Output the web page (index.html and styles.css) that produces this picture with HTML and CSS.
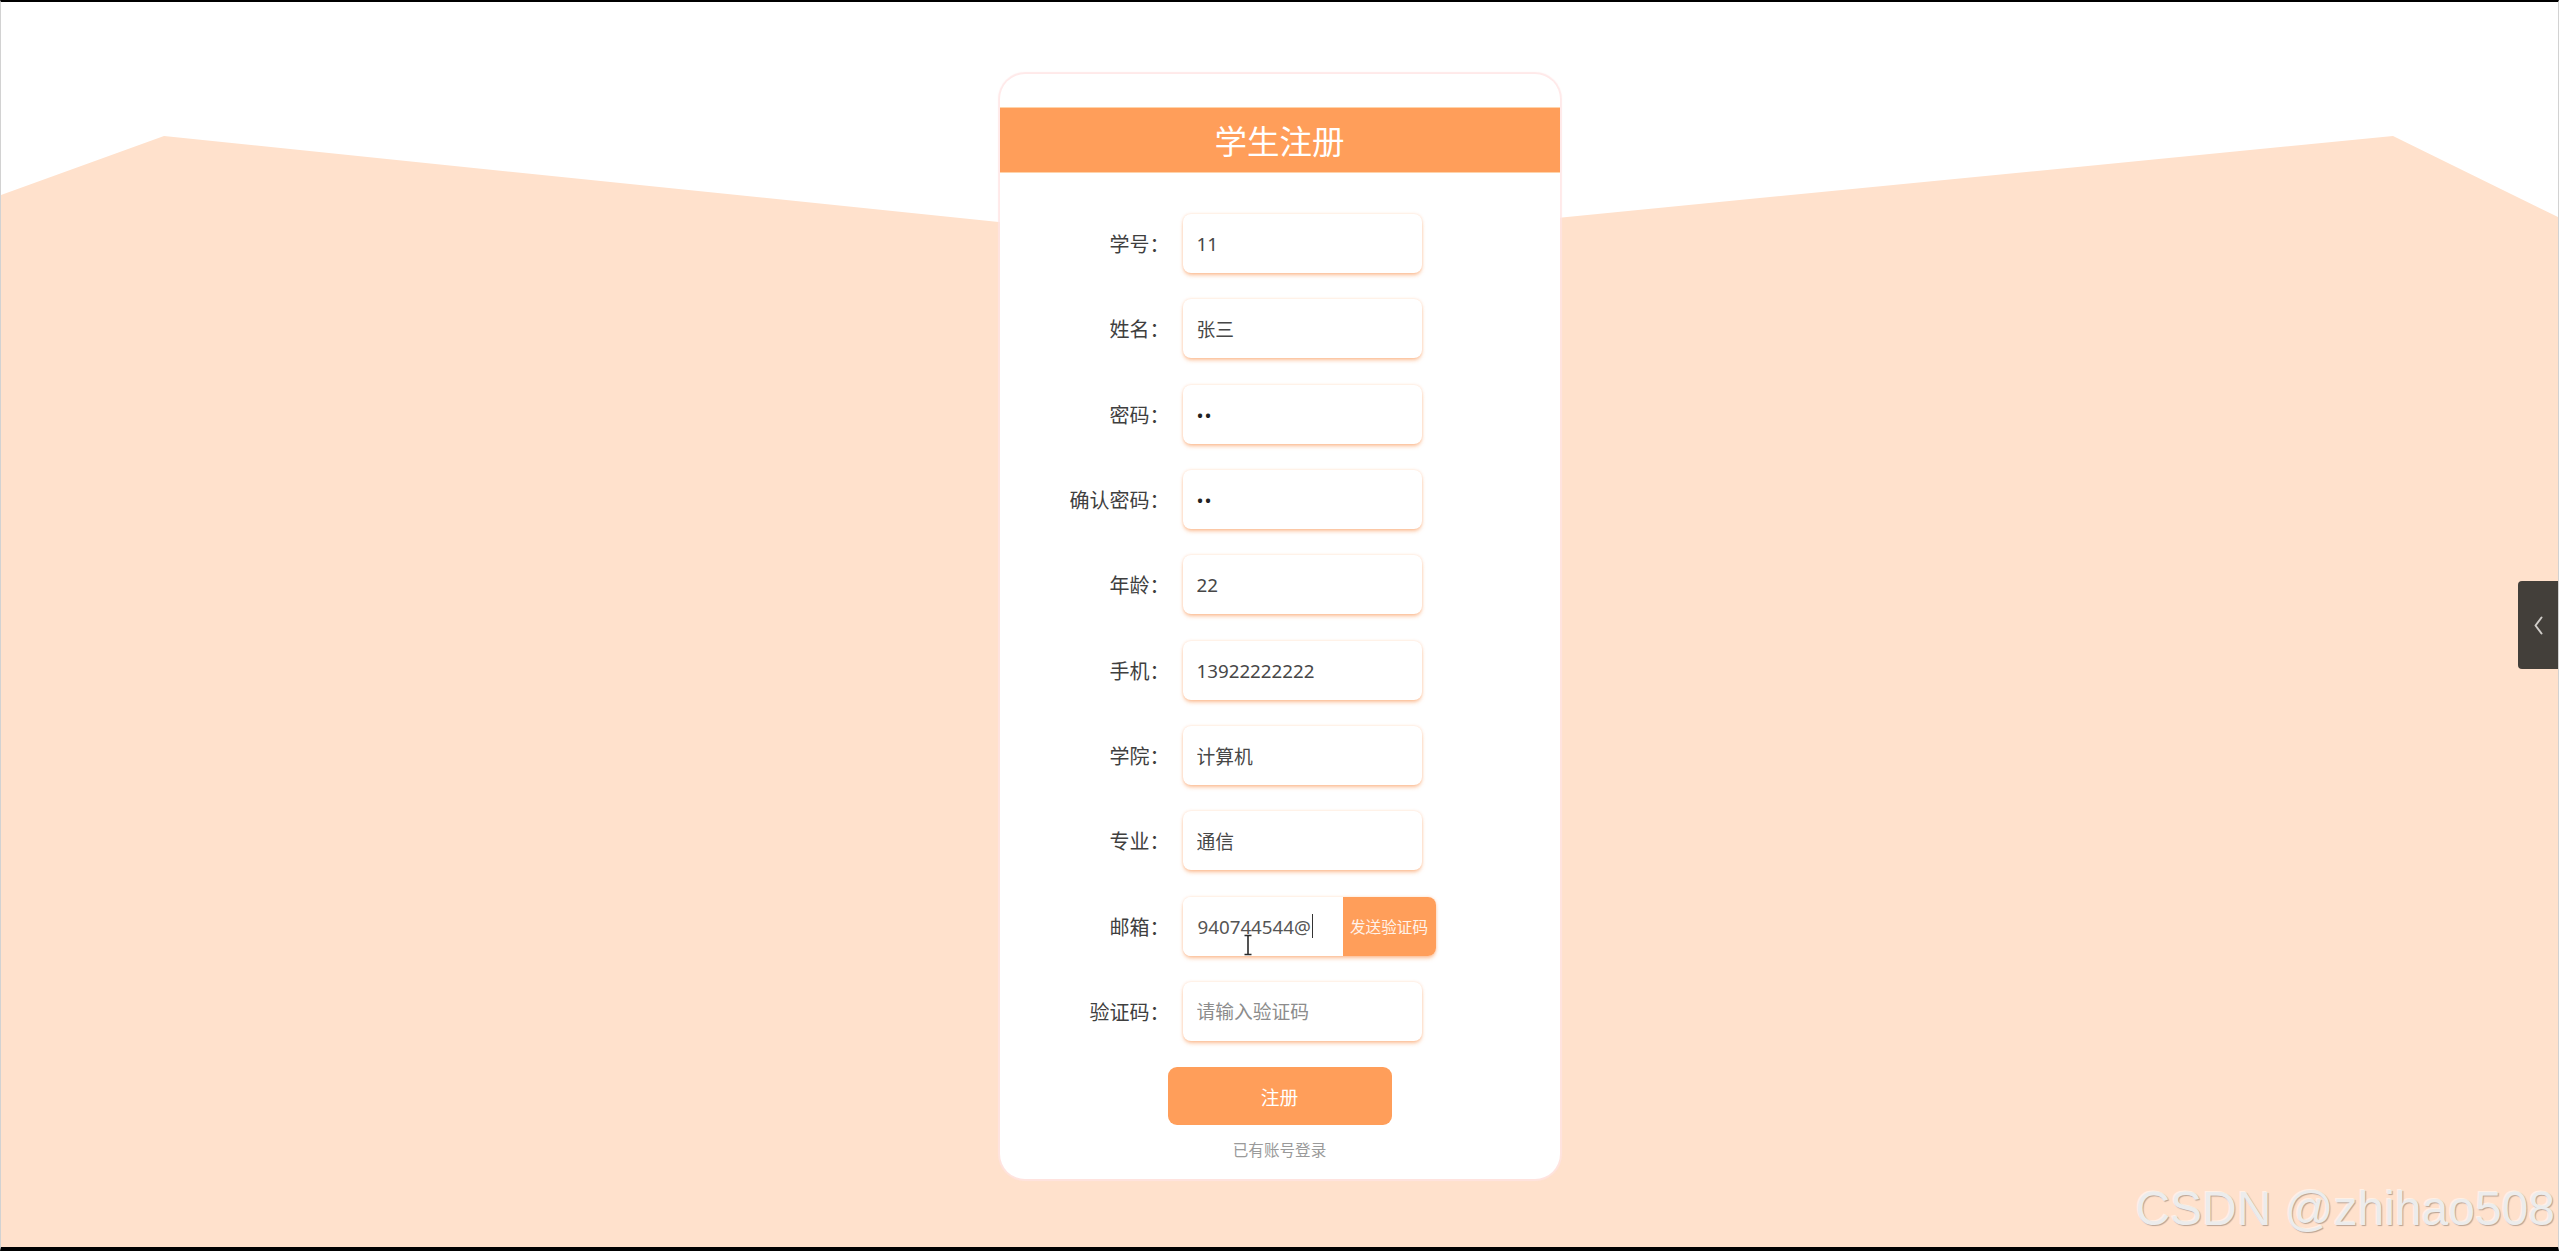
FILE: index.html
```html
<!DOCTYPE html>
<html lang="zh-CN">
<head>
<meta charset="utf-8">
<title>学生注册</title>
<link rel="stylesheet" href="styles.css">
</head>
<body>
<div class="screen">
  <div class="backdrop"></div>
  <main class="page">
    <section class="card">
      <h1 class="card-title">学生注册</h1>
      <form class="form">
        <div class="row"><label class="label">学号：</label><input class="field" type="text" value="11"></div>
        <div class="row"><label class="label">姓名：</label><input class="field" type="text" value="张三"></div>
        <div class="row"><label class="label">密码：</label><input class="field field-pass" type="password" value="11"></div>
        <div class="row"><label class="label">确认密码：</label><input class="field field-pass" type="password" value="11"></div>
        <div class="row"><label class="label">年龄：</label><input class="field" type="text" value="22"></div>
        <div class="row"><label class="label">手机：</label><input class="field" type="text" value="13922222222"></div>
        <div class="row"><label class="label">学院：</label><input class="field" type="text" value="计算机"></div>
        <div class="row"><label class="label">专业：</label><input class="field" type="text" value="通信"></div>
        <div class="row">
          <label class="label">邮箱：</label>
          <div class="field-group">
            <div class="field field-email">940744544@<span class="caret"></span></div>
            <button class="send-btn" type="button">发送验证码</button>
            <svg class="ibeam" width="10" height="22" viewBox="0 0 10 22"><path d="M1.5 1.5 H8.5 M5 1.5 V20.5 M1.5 20.5 H8.5" fill="none" stroke="#2a2a2a" stroke-width="1.6"/></svg>
          </div>
        </div>
        <div class="row"><label class="label">验证码：</label><input class="field" type="text" placeholder="请输入验证码"></div>
        <button class="submit" type="button">注册</button>
        <p class="login-link">已有账号登录</p>
      </form>
    </section>
  </main>
  <button class="side-toggle" type="button" aria-label="展开">
    <svg width="11" height="19" viewBox="0 0 11 19"><path d="M8.5 1.5 L2.5 9.5 L8.5 17.5" fill="none" stroke="#cfccc8" stroke-width="2" stroke-linecap="round" stroke-linejoin="round"/></svg>
  </button>
  <div class="watermark">CSDN @zhihao508</div>
</div>
</body>
</html>
```
FILE: styles.css
```css
html, body {
  margin: 0;
  padding: 0;
}

body {
  background: #000;
  font-family: "Noto Sans", "Noto Sans CJK SC", sans-serif;
}

.screen {
  position: relative;
  height: 1251px;
  box-sizing: border-box;
  border-top: 2px solid #000;
  border-bottom: 4px solid #000;
  border-left: 1px solid #d2d2d2;
  border-right: 1px solid #d2d2d2;
  background: #fff;
  overflow: hidden;
}

.backdrop {
  position: absolute;
  inset: 0;
  background: #ffe1cc;
  clip-path: polygon(0 193px, 163px 134px, 1250px 246px, 2392px 134px, 100% 215px, 100% 100%, 0 100%);
}

.page {
  position: relative;
  display: flex;
  justify-content: center;
  padding-top: 72px;
}

.card {
  width: 560px;
  background: #fff;
  border-radius: 25px;
  box-shadow: 0 0 1px 2px rgba(255, 228, 228, 0.8);
  padding: 33px 0 19px;
}

.card-title {
  margin: 0;
  height: 64px;
  border-top: 1px solid #ffd3aa;
  border-bottom: 1px solid #ffd3aa;
  background: #ff9e5a;
  color: #fff;
  font-size: 32.5px;
  font-weight: 400;
  display: flex;
  align-items: center;
  justify-content: center;
}

.form {
  margin: 41px 0 0;
  display: flex;
  flex-direction: column;
  gap: 26.35px;
}

.row {
  display: flex;
  align-items: center;
  height: 59px;
}

.label {
  width: 170px;
  margin-right: 13px;
  text-align: right;
  font-size: 20px;
  color: #3f3f3f;
}

.field {
  width: 239px;
  height: 59px;
  box-sizing: border-box;
  border: 0;
  border-radius: 8px;
  background: #fff;
  padding: 0 14px;
  font: inherit;
  font-size: 18.75px;
  color: #474747;
  outline: none;
  box-shadow: 0 3px 4px -1px rgba(248, 140, 70, 0.55), 0 0 3px rgba(255, 175, 125, 0.45);
}

.field::placeholder {
  color: #8c8c8c;
}

.field-pass {
  color: #222;
  letter-spacing: 1px;
}

.field-group {
  position: relative;
  display: flex;
  border-radius: 8px;
  box-shadow: 0 3px 4px -1px rgba(248, 140, 70, 0.55), 0 0 3px rgba(255, 175, 125, 0.45);
}

.field-email {
  width: 160px;
  display: flex;
  align-items: center;
  border-radius: 8px 0 0 8px;
  box-shadow: none;
  color: #555;
  padding-left: 15px;
}

.caret {
  display: inline-block;
  width: 1.5px;
  height: 24px;
  background: #333;
  margin-left: 1px;
}

.ibeam {
  position: absolute;
  left: 60px;
  top: 37px;
}

.send-btn {
  width: 93px;
  height: 59px;
  border: 0;
  padding: 0;
  border-radius: 0 8px 8px 0;
  background: #ff9e5a;
  color: #fff3ea;
  font: inherit;
  font-size: 15.6px;
}

.submit {
  display: block;
  margin: 0 auto;
  margin-top: -0.35px;
  width: 224px;
  height: 58px;
  border: 0;
  border-radius: 9px;
  background: #ff9e5a;
  color: #fff;
  font: inherit;
  font-size: 18.75px;
}

.login-link {
  margin: -11px 0 0;
  text-align: center;
  font-size: 15.6px;
  line-height: 20px;
  color: #9a9a9a;
}

.side-toggle {
  position: absolute;
  right: 0;
  top: 579px;
  width: 40px;
  height: 88px;
  padding: 0;
  border: 0;
  border-radius: 4px 0 0 4px;
  background: #433f3a;
  display: flex;
  align-items: center;
  justify-content: center;
}

.watermark {
  position: absolute;
  right: 3px;
  bottom: 14px;
  font-family: "Liberation Sans", Arial, sans-serif;
  font-size: 48px;
  line-height: 1;
  color: #ececec;
  text-shadow: 1px 1px 1px rgba(0, 0, 0, 0.28), -1px -1px 0 rgba(255, 255, 255, 0.5);
}
```
